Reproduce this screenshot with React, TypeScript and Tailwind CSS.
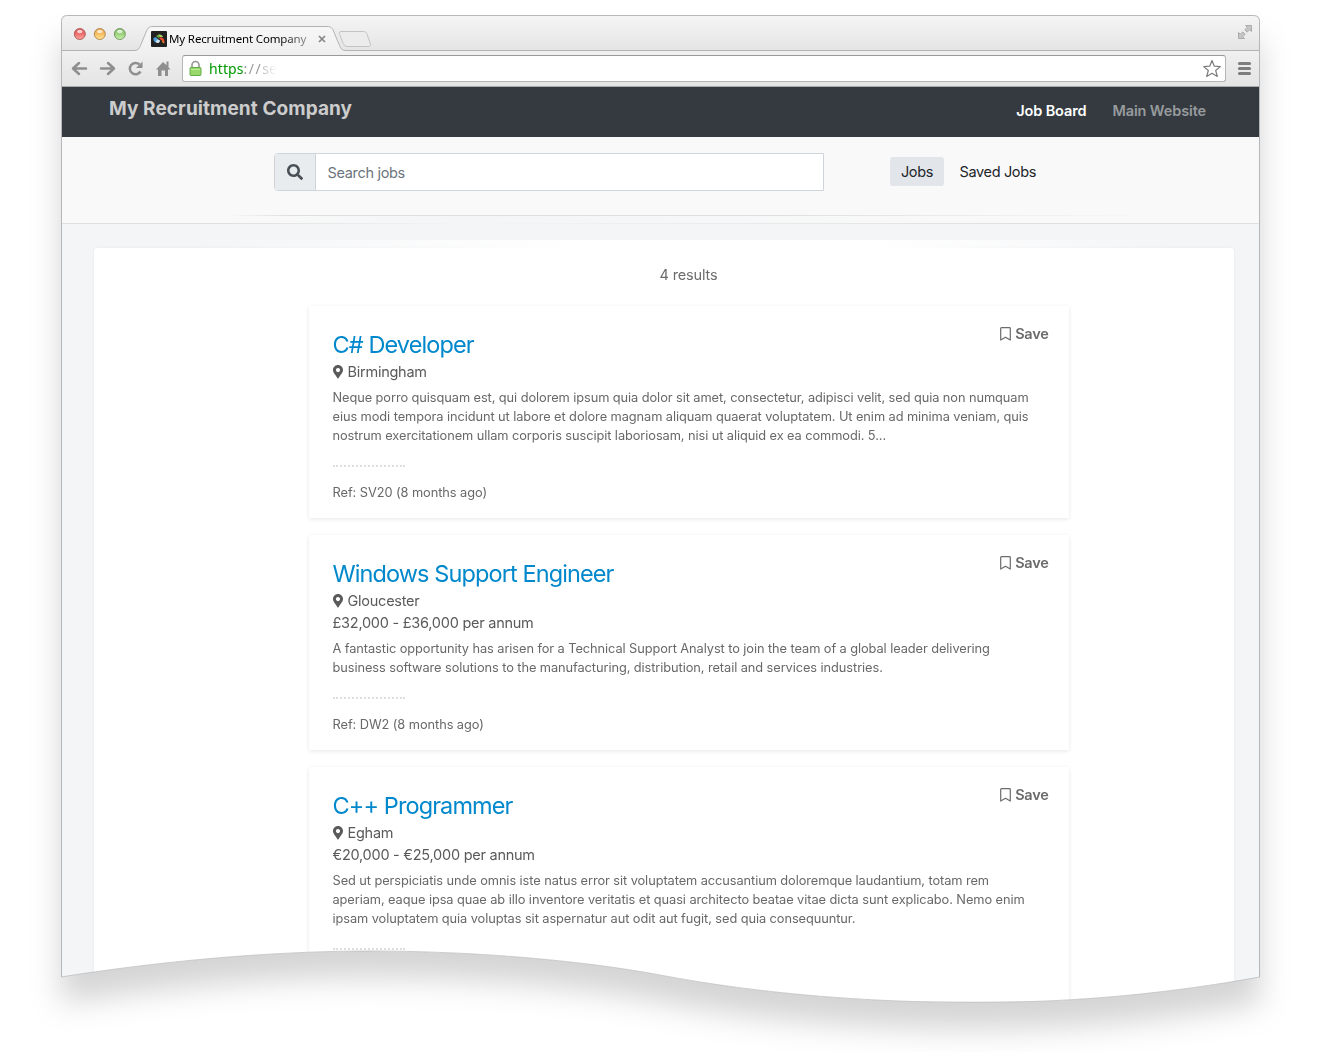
import { FaSearch, FaMapMarkerAlt } from "react-icons/fa";

const WAVE =
  "M0 962C119 943 229 936 309 936C409 936 519 945 599 960C699 979 809 987.5 914 987.5C1019 987.5 1109 978 1199 962";

const jobs = [
  {
    title: "C# Developer",
    location: "Birmingham",
    salary: "",
    lines: [
      "Neque porro quisquam est, qui dolorem ipsum quia dolor sit amet, consectetur, adipisci velit, sed quia non numquam",
      "eius modi tempora incidunt ut labore et dolore magnam aliquam quaerat voluptatem. Ut enim ad minima veniam, quis",
      "nostrum exercitationem ullam corporis suscipit laboriosam, nisi ut aliquid ex ea commodi. 5...",
    ],
    footer: "Ref: SV20 (8 months ago)",
  },
  {
    title: "Windows Support Engineer",
    location: "Gloucester",
    salary: "£32,000 - £36,000 per annum",
    lines: [
      "A fantastic opportunity has arisen for a Technical Support Analyst to join the team of a global leader delivering",
      "business software solutions to the manufacturing, distribution, retail and services industries.",
    ],
    footer: "Ref: DW2 (8 months ago)",
  },
  {
    title: "C++ Programmer",
    location: "Egham",
    salary: "€20,000 - €25,000 per annum",
    lines: [
      "Sed ut perspiciatis unde omnis iste natus error sit voluptatem accusantium doloremque laudantium, totam rem",
      "aperiam, eaque ipsa quae ab illo inventore veritatis et quasi architecto beatae vitae dicta sunt explicabo. Nemo enim",
      "ipsam voluptatem quia voluptas sit aspernatur aut odit aut fugit, sed quia consequuntur.",
    ],
    footer: "",
  },
];

function TabStrip() {
  return (
    <div className="relative h-[36px] shrink-0 bg-linear-to-b from-[#f5f5f5] to-[#e4e4e4]">
      <svg className="absolute inset-0" width="1199" height="36" fill="none">
        <defs>
          <linearGradient id="tab" x1="0" y1="0" x2="0" y2="1">
            <stop offset="0" stopColor="#f7f7f7" />
            <stop offset="1" stopColor="#f0f0f0" />
          </linearGradient>
          <linearGradient id="red" x1="0" y1="0" x2="0" y2="1">
            <stop offset="0" stopColor="#d95252" />
            <stop offset=".5" stopColor="#ee6f6d" />
            <stop offset="1" stopColor="#ffa9a5" />
          </linearGradient>
          <linearGradient id="amber" x1="0" y1="0" x2="0" y2="1">
            <stop offset="0" stopColor="#e0a04a" />
            <stop offset=".5" stopColor="#f5be60" />
            <stop offset="1" stopColor="#ffe698" />
          </linearGradient>
          <linearGradient id="green" x1="0" y1="0" x2="0" y2="1">
            <stop offset="0" stopColor="#84bd6a" />
            <stop offset=".5" stopColor="#9ad27c" />
            <stop offset="1" stopColor="#cdf3ae" />
          </linearGradient>
        </defs>
        <path
          d="M0 35.500H73C77 35.500 78 34 79.500 30.500L85.500 16C87 12.500 88.500 11.500 92 11.500H266C269.500 11.500 271 12.500 272.500 16L278.500 30.500C280 34 281 35.500 285 35.500H1199V37H0Z"
          fill="url(#tab)"
          stroke="#b3b3b3"
        />
        <path
          d="M280 16.500H302C304.500 16.500 305.500 17.500 306.200 19.500L309 28C310 31 309.500 31.500 307 31.500H287C284.500 31.500 283 30.500 282.200 28.500L278.800 19.500C278 17.500 278.200 16.500 280 16.500Z"
          fill="#ececec"
          stroke="#c4c4c4"
        />
        <circle cx="18.800" cy="19" r="5.500" fill="url(#red)" stroke="#b0605c" />
        <circle cx="38.800" cy="19" r="5.500" fill="url(#amber)" stroke="#b48d55" />
        <circle cx="58.800" cy="19" r="5.500" fill="url(#green)" stroke="#789b68" />
        <ellipse cx="18.800" cy="16.500" rx="2.800" ry="1.700" fill="#fff" opacity=".7" />
        <ellipse cx="38.800" cy="16.500" rx="2.800" ry="1.700" fill="#fff" opacity=".7" />
        <ellipse cx="58.800" cy="16.500" rx="2.800" ry="1.700" fill="#fff" opacity=".7" />
        <path d="M258 21l6 6M264 21l-6 6" stroke="#858585" strokeWidth="1.700" />
        <g fill="#c6c6c6" stroke="#a0a0a0" strokeWidth=".8">
          <path d="M1184.500 10.500h6v6l-1.800-1.800-2.500 2.500-2.400-2.400 2.500-2.500z" />
          <path d="M1177.500 17.500v6h6l-1.800-1.800 2.500-2.500-2.400-2.400-2.500 2.500z" />
        </g>
      </svg>
      <div className="relative flex items-center pt-[16px] pl-[90px]">
        <svg width="16" height="16" viewBox="0 0 16 16">
          <rect width="16" height="16" rx="1" fill="#222" />
          <path d="M5 5C6 3.500 8 3.500 9 5L8 7.500Z" fill="#5f9e35" />
          <path d="M7 3.700C9.500 2.800 11.500 4 12 6L9 6.300Z" fill="#a9cf63" />
          <path d="M2.500 7.500C3.500 5.500 6 6 6.500 8L5 11.500C3.500 11 2 9.500 2.500 7.500Z" fill="#4d9fdc" />
          <path d="M4.500 11L6.500 8L9 9.500C9 12 6.500 13 4.500 11Z" fill="#cfe6f5" />
          <path d="M8 7.500C10.500 5 14 7.500 13.500 12L11 9.500Z" fill="#ee4b2b" />
          <path d="M10.500 9L13.500 12C12.500 12.800 11.500 12 10.500 9Z" fill="#f6a623" />
        </svg>
        <span className="ml-[2px] w-[139px] bg-linear-to-r from-black from-75% to-[#999] bg-clip-text font-['Noto_Sans',sans-serif] text-[11.500px] leading-4 tracking-[-0.140px] whitespace-nowrap text-transparent">
          My Recruitment Company
        </span>
      </div>
    </div>
  );
}

function Toolbar() {
  return (
    <div className="flex h-[36px] shrink-0 items-center border-b border-[#a9a9a9] bg-linear-to-b from-[#f0f0f0] to-[#e4e4e4]">
      <svg className="shrink-0" width="120" height="35" fill="none" stroke="#8f8f8f" strokeWidth="2.500">
        <path d="M12 17.500H25M18 12l-6 5.500l6 5.500" strokeLinecap="round" strokeLinejoin="round" />
        <path d="M40 17.500H53M47 12l6 5.500l-6 5.500" strokeLinecap="round" strokeLinejoin="round" />
        <path d="M79.500 20.500A5.700 5.700 0 1 1 78.500 13.500" />
        <path d="M81.500 10.500V17H75Z" fill="#8f8f8f" stroke="none" />
        <path
          d="M102 11L95 18.500H97V25H100.500V19.500H104V25H107V18.500H109.500L107.500 16.300V10.500H105.500V14.300Z"
          fill="#8f8f8f"
          stroke="none"
        />
      </svg>
      <div className="ml-px flex h-[27px] w-[1044px] items-center rounded-[3px] border border-[#b5b5b5] border-t-[#999] bg-white px-[6px]">
        <svg width="13" height="17" viewBox="0 0 13 17" fill="none">
          <path d="M3 8V5a3.500 3.500 0 0 1 7 0v3" stroke="#959595" strokeWidth="1.600" />
          <rect x="1" y="7.500" width="11" height="8" rx="1" fill="#98d86b" stroke="#65ab48" />
          <path d="M2 9.500H11" stroke="#bdec98" />
        </svg>
        <div className="ml-[7px] font-['Noto_Sans',sans-serif] text-[14px] leading-5 tracking-[0.100px] text-[#999]">
          <span className="text-[#009a00]">https</span>
          <span className="tracking-[1.500px]">://</span>
          <span className="bg-linear-to-r from-[#bbb] to-white bg-clip-text text-transparent">se</span>
        </div>
        <svg className="-mr-[3px] ml-auto" width="20" height="20" viewBox="0 0 20 20">
          <path
            d="M10 1.500l2.300 5.700 6 .4-4.600 3.900 1.600 6L10 14.300l-5.300 3.200 1.600-6L1.700 7.600l6-.4z"
            fill="#fff"
            stroke="#7d7d7d"
            strokeWidth="1.200"
            strokeLinejoin="round"
          />
        </svg>
      </div>
      <div className="ml-[12px] flex flex-col gap-[2px]">
        <div className="h-[3px] w-[13px] rounded-full bg-[#7c7c7c]" />
        <div className="h-[3px] w-[13px] rounded-full bg-[#7c7c7c]" />
        <div className="h-[3px] w-[13px] rounded-full bg-[#7c7c7c]" />
      </div>
    </div>
  );
}

function JobCard({ job }: { job: (typeof jobs)[number] }) {
  return (
    <div className="relative mb-[17px] w-[760px] bg-white px-[23.500px] pt-[24px] pb-[16px] shadow-[0_1px_4px_rgba(0,0,0,0.1)]">
      <div className="absolute top-[18px] right-[20.500px] flex items-center text-[14.500px] leading-5 font-semibold tracking-[-0.250px] text-[#6b6b6b]">
        <svg className="mr-[4px]" width="11" height="14" fill="none" stroke="#6b6b6b" strokeWidth="1.200">
          <path d="M.7 13V1.500Q.7 .7 1.500 .7H9.500Q10.300 .7 10.300 1.500V13L5.500 10.200Z" strokeLinejoin="round" />
        </svg>
        Save
      </div>
      <h2 className="text-[23.500px] leading-[30px] tracking-[-0.900px] whitespace-nowrap text-[#0088cc]">{job.title}</h2>
      <div className="mt-[1px] flex h-[22px] items-center text-[14.500px] tracking-[-0.250px] text-[#5a5a5a]">
        <FaMapMarkerAlt className="mr-[5px] h-[13.500px] w-[10px]" />
        {job.location}
      </div>
      {job.salary && (
        <div className="h-[22px] text-[14.500px] leading-[22px] tracking-[-0.250px] text-[#5a5a5a]">{job.salary}</div>
      )}
      <div className="mt-[5px] text-[12.800px] leading-[19px] tracking-[-0.075px] whitespace-nowrap text-[#686868]">
        {job.lines.map((line) => (
          <div key={line}>{line}</div>
        ))}
      </div>
      <div className="mt-[20px] w-[72px] border-t-2 border-dotted border-[#dedede]" />
      <div className="mt-[16px] h-[19px] text-[12.800px] leading-[19px] tracking-[-0.060px] text-[#686868]">
        {job.footer}
      </div>
    </div>
  );
}

export default function App() {
  return (
    <div className="h-[1052px] w-[1325px] overflow-hidden bg-white pt-[15px] pl-[61px] font-[Inter,sans-serif]">
      <div className="relative h-[990px] w-[1199px] drop-shadow-[0_26px_15px_rgba(0,0,0,0.17)]">
        <svg className="absolute" width="0" height="0">
          <clipPath id="torn">
            <path d={`${WAVE}V6Q1199 0 1193 0H6Q0 0 0 6Z`} />
          </clipPath>
        </svg>
        <div className="h-full [clip-path:url(#torn)]">
          <div className="flex h-full flex-col bg-[#f4f5f7]">
            <TabStrip />
            <Toolbar />
            <header className="flex h-[50px] shrink-0 items-center bg-[#343a40] pr-[54px] pl-[48px]">
              <div className="-mt-[6px] text-[19px] font-bold tracking-[0.080px] text-[#ccc]">My Recruitment Company</div>
              <nav className="-mt-[2px] ml-auto flex gap-[26px] text-[14.500px] font-semibold tracking-[-0.120px]">
                <a className="text-white">Job Board</a>
                <a className="text-[#989b9e]">Main Website</a>
              </nav>
            </header>
            <div className="relative flex h-[87px] shrink-0 border-b border-[#dee0e2] bg-[#f9f9f9] pt-[16px] pl-[213px]">
              <div className="flex h-[38px] w-[550px] rounded-l-[4px] border border-[#ced4da] bg-white">
                <div className="flex w-[41px] items-center justify-center rounded-l-[3px] border-r border-[#ced4da] bg-[#e9ecef]">
                  <FaSearch className="size-[16px] text-[#495057]" />
                </div>
                <span className="pl-[11.500px] text-[14.500px] leading-[38px] tracking-[-0.320px] text-[#6c757d]">Search jobs</span>
              </div>
              <div className="mt-[4px] ml-[66px] flex h-[29px] items-center text-[14.500px] tracking-[-0.350px] text-[#212529]">
                <span className="flex h-full w-[54px] items-center justify-center rounded-[3px] bg-[#e2e6ea]">Jobs</span>
                <span className="ml-[15.500px]">Saved Jobs</span>
              </div>
              {/* soft step in the middle of the divider */}
              <div className="absolute top-[78px] left-[169px] h-[9px] w-[780px] bg-linear-to-r from-transparent via-[#f4f5f7] via-30% to-transparent" />
              <div className="absolute top-[78px] left-[169px] h-px w-[925px] bg-[linear-gradient(to_right,transparent,#dee0e2_6%,#dee0e2_60%,transparent)]" />
            </div>
            <main className="relative mt-[24px] ml-[33px] h-[760px] w-[1140px] shrink-0 rounded-t-[3px] bg-white shadow-[0_0_3px_rgba(0,0,0,0.06)]">
              <div className="absolute -top-[8px] left-[90px] h-[9px] w-[990px] bg-[linear-gradient(to_right,transparent,white_40%,white_70%,transparent)]" />
              <div className="pt-[16px] pl-[49px] text-center text-[14.500px] leading-[22px] tracking-[-0.150px] text-[#6b6b6b]">
                4 results
              </div>
              <div className="mt-[20px] ml-[215px]">
                {jobs.map((job) => (
                  <JobCard key={job.title} job={job} />
                ))}
              </div>
            </main>
          </div>
        </div>
        <svg className="absolute inset-0" width="1199" height="990" fill="none" stroke="#b4b8bb">
          <path d="M.5 962V6.500Q.5 .5 6.500 .5H1192.500Q1198.500 .5 1198.500 6.500V962" />
          <path d={WAVE} strokeWidth=".7" />
        </svg>
      </div>
    </div>
  );
}
